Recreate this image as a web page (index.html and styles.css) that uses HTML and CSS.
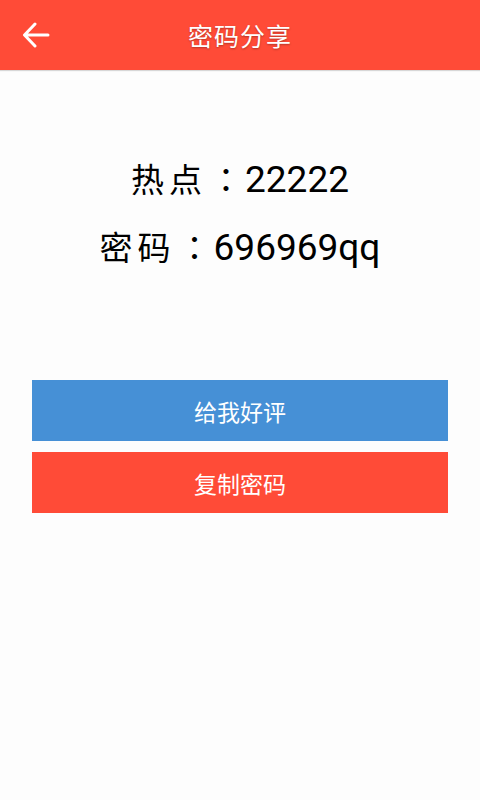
FILE: index.html
```html
<!DOCTYPE html>
<html lang="zh">
<head>
<meta charset="utf-8">
<link rel="stylesheet" href="styles.css">
</head>
<body>
<div class="app">
  <header class="bar">
    <span class="back">
      <svg width="28" height="26" viewBox="0 0 28 26"><path d="M26 13H3M13 2L2.5 13L13 24" fill="none" stroke="#fff" stroke-width="3" stroke-linecap="round" stroke-linejoin="round"/></svg>
    </span>
    <h1 class="title">密码分享</h1>
  </header>
  <main class="content">
    <div class="info">
      <p class="line"><span class="label">热点</span><span class="colon">：</span><span class="value">22222</span></p>
      <p class="line"><span class="label">密码</span><span class="colon">：</span><span class="value">696969qq</span></p>
    </div>
    <div class="actions">
      <button class="btn btn-blue">给我好评</button>
      <button class="btn btn-red">复制密码</button>
    </div>
  </main>
</div>
</body>
</html>
```
FILE: styles.css
```css
html, body {
  margin: 0;
  padding: 0;
  background: #fdfdfd;
}
body {
  font-family: "Noto Sans CJK SC", "Noto Sans", sans-serif;
  width: 480px;
  height: 800px;
  overflow: hidden;
}
.bar {
  height: 70px;
  background: #ff4b37;
  display: flex;
  align-items: center;
  justify-content: center;
  position: relative;
  box-shadow: 0 1px 1px rgba(0,0,0,0.15);
}
.back {
  position: absolute;
  left: 22px;
  top: 22px;
  display: flex;
}
.title {
  margin: 0;
  color: #fff;
  font-size: 25px;
  font-weight: 400;
  letter-spacing: 1px;
  text-shadow: 0 1px 2px rgba(0,0,0,0.3);
}
.content {
  display: flex;
  flex-direction: column;
  align-items: center;
}
.info {
  margin-top: 83px;
  display: flex;
  flex-direction: column;
  align-items: center;
  gap: 18px;
}
.line {
  margin: 0;
  display: flex;
  align-items: baseline;
  height: 50px;
  line-height: 50px;
  color: #000;
}
.label {
  font-family: "Noto Sans CJK SC", sans-serif;
  font-size: 33px;
  letter-spacing: 5px;
}
.colon {
  font-family: "Noto Sans CJK TC", "Noto Sans CJK JP", sans-serif;
  font-size: 33px;
  width: 38px;
  text-align: center;
}
.value {
  font-family: Roboto, "Noto Sans", sans-serif;
  font-size: 37px;
}
.actions {
  margin-top: 109px;
  width: 416px;
  display: flex;
  flex-direction: column;
  gap: 11px;
}
.btn {
  height: 61px;
  border: none;
  color: #fff;
  font-family: inherit;
  font-size: 23px;
  padding: 0;
  margin: 0;
}
.btn-blue { background: #4690d6; }
.btn-red { background: #ff4b37; }
```
